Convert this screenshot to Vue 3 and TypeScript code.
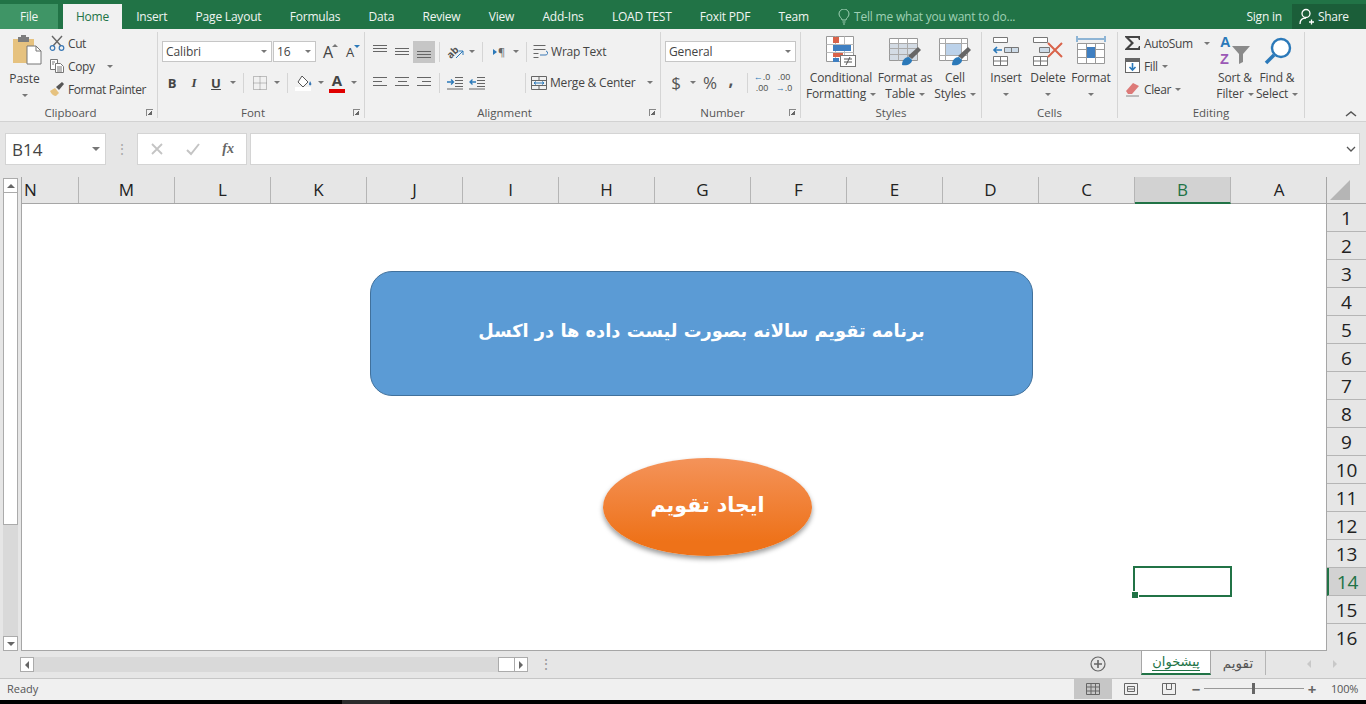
<template>
	<div class="app">
		<!-- title tabs -->
		<div class="tabs">
			<div class="tab file">File</div>
			<div class="tab active">Home</div>
			<div v-for="t in tabs" :key="t" class="tab">{{ t }}</div>
			<div class="tell">
				<svg width="12" height="16" viewBox="0 0 12 16" fill="none" stroke="#9fd0b4">
					<path d="M4 11c0-2-3-3-3-6a5 5 0 0 1 10 0c0 3-3 4-3 6zM4.500 13h3M5 15h2" />
				</svg>
				<span>Tell me what you want to do...</span>
			</div>
			<div class="signin">Sign in</div>
			<div class="share">
				<svg width="16" height="17" viewBox="0 0 16 17" fill="none" stroke="#fff" stroke-width="1.300">
					<circle cx="7" cy="5.500" r="4" />
					<path d="M1 16c0-4 2-6 6-6M10 14h5M12.500 11.500v5" />
				</svg>
				<span>Share</span>
			</div>
		</div>

		<!-- ribbon -->
		<div class="ribbon">
			<div class="group clipboard">
				<div class="body row-flex">
					<div class="paste">
						<svg width="30" height="32" viewBox="0 0 30 32">
							<rect x="1" y="4" width="21" height="24" fill="#e6c27f" />
							<rect x="6" y="2" width="11" height="5" fill="#7d7d7d" />
							<rect x="9" y="0" width="5" height="3" fill="#7d7d7d" />
							<path d="M15 11h9l5 5v13H15z" fill="#fff" stroke="#777" />
							<path d="M24 11v5h5" fill="none" stroke="#777" />
						</svg>
						<span>Paste</span>
						<i class="caret"></i>
					</div>
					<div class="small-col">
						<div class="small">
							<svg width="16" height="16" viewBox="0 0 16 16" fill="none">
								<path d="M3 1l9 10M13 1L4 11" stroke="#666" stroke-width="1.400" />
								<circle cx="3.500" cy="13" r="2.300" stroke="#3a78b5" stroke-width="1.200" />
								<circle cx="12.500" cy="13" r="2.300" stroke="#3a78b5" stroke-width="1.200" />
							</svg>
							<span>Cut</span>
						</div>
						<div class="small">
							<svg width="16" height="16" viewBox="0 0 16 16" fill="#fff" stroke="#777">
								<path d="M1.500 1.500h7v10h-7z" />
								<path d="M6.500 5.500h5l3 3v6h-8z" />
								<path d="M8 9h5M8 11h5M8 13h5M3 4h3M3 6h2" fill="none" />
							</svg>
							<span>Copy</span>
							<i class="caret copy-caret"></i>
						</div>
						<div class="small">
							<svg width="16" height="16" viewBox="0 0 16 16">
								<path d="M1 10l5-3 4 5-3 3c-2 0-5-2-6-5z" fill="#e6c27f" />
								<path d="M7 6l6-5 2 2-5 6z" fill="#555" />
							</svg>
							<span>Format Painter</span>
						</div>
					</div>
				</div>
				<div class="label launch">Clipboard<i class="launcher"></i></div>
			</div>

			<div class="group font">
				<div class="body pad-rows">
					<div class="rib-row">
						<div class="select font-name"><span>Calibri</span><i class="caret"></i></div>
						<div class="select font-size"><span>16</span><i class="caret"></i></div>
						<div class="cell grow-a">A<small class="up"></small></div>
						<div class="cell shrink-a">A<small class="down"></small></div>
					</div>
					<div class="rib-row font-tools">
						<div class="cell bold">B</div>
						<div class="cell italic">I</div>
						<div class="cell underline">U</div>
						<div class="mini"><i class="caret"></i></div>
						<i class="sep"></i>
						<div class="cell">
							<svg width="16" height="16" viewBox="0 0 16 16" fill="none" stroke="#888" stroke-dasharray="1 1">
								<path d="M1.500 1.500h13v13h-13zM1.500 8h13M8 1.500v13" />
							</svg>
						</div>
						<div class="mini"><i class="caret"></i></div>
						<i class="sep"></i>
						<div class="cell">
							<svg width="18" height="16" viewBox="0 0 18 16" fill="none">
								<rect x="0" y="12" width="16" height="4" fill="#fff" />
								<path d="M7 1l6 6-5 5-5-5z" stroke="#555" fill="#fff" />
								<path d="M15 6c1 2 2 3 1 4s-2 0-2-1 1-2 1-3z" fill="#3a78b5" />
							</svg>
						</div>
						<div class="mini"><i class="caret"></i></div>
						<div class="cell color-a">A</div>
						<div class="mini"><i class="caret"></i></div>
					</div>
				</div>
				<div class="label launch">Font<i class="launcher"></i></div>
			</div>

			<div class="group alignment">
				<div class="body pad-rows">
					<div class="rib-row">
						<div class="cell"><i class="lines top"></i></div>
						<div class="cell"><i class="lines mid"></i></div>
						<div class="cell on"><i class="lines low"></i></div>
						<i class="sep tight"></i>
						<div class="cell orient">
							<span class="ab">ab</span>
							<svg width="8" height="8" viewBox="0 0 8 8" fill="none" stroke="#2b79b9">
								<path d="M0 8l7-7M3 1h4v4" />
							</svg>
						</div>
						<div class="mini"><i class="caret"></i></div>
						<i class="sep"></i>
						<div class="cell pilcrow"><span class="tri"></span>¶</div>
						<div class="mini"><i class="caret"></i></div>
						<i class="sep"></i>
						<div class="wide">
							<svg width="16" height="16" viewBox="0 0 16 16" fill="none" stroke="#666">
								<path d="M1.500 1.500h12M1.500 5.500h12M1.500 9.500h5M1.500 13.500h5" />
								<path d="M8 11h5a2 2 0 0 0 1-4" stroke="#3a78b5" />
							</svg>
							<span>Wrap Text</span>
						</div>
					</div>
					<div class="rib-row">
						<div class="cell"><i class="lines al"></i></div>
						<div class="cell"><i class="lines ac"></i></div>
						<div class="cell"><i class="lines ar"></i></div>
						<i class="sep tight"></i>
						<div class="cell">
							<svg width="16" height="14" viewBox="0 0 16 14" fill="none" stroke="#666">
								<path d="M8 1.500h8M8 4.500h8M8 7.500h8M8 10.500h8M0 13h16" />
								<path d="M0 6h6M4 3.500L6.500 6 4 8.500" stroke="#2b79b9" stroke-width="1.300" />
							</svg>
						</div>
						<div class="cell">
							<svg width="16" height="14" viewBox="0 0 16 14" fill="none" stroke="#666">
								<path d="M8 1.500h8M8 4.500h8M8 7.500h8M8 10.500h8M0 13h16" />
								<path d="M1 6h6M3.500 3.500L1 6l2.500 2.500" stroke="#2b79b9" stroke-width="1.300" />
							</svg>
						</div>
						<i class="sep far"></i>
						<div class="wide">
							<svg width="16" height="16" viewBox="0 0 16 16" fill="none" stroke="#666">
								<path d="M.500 1.500h15v13H.500zM.500 5.500h15M.500 10.500h15M8 1.500v4M8 10.500v4" />
								<path d="M3 8h10M5 6.500L3 8l2 1.500M11 6.500L13 8l-2 1.500" stroke="#2b79b9" />
							</svg>
							<span>Merge &amp; Center</span>
							<i class="caret merge-caret"></i>
						</div>
					</div>
				</div>
				<div class="label launch">Alignment<i class="launcher"></i></div>
			</div>

			<div class="group number">
				<div class="body pad-rows">
					<div class="rib-row">
						<div class="select general"><span>General</span><i class="caret"></i></div>
					</div>
					<div class="rib-row num-tools">
						<div class="cell sym">$</div>
						<div class="mini"><i class="caret"></i></div>
						<div class="cell sym percent">%</div>
						<div class="cell sym comma">,</div>
						<i class="sep num-sep"></i>
						<div class="cell dec">
							<span><b>←</b>.0</span><span>.00</span>
						</div>
						<div class="cell dec">
							<span>.00</span><span><b>→</b>.0</span>
						</div>
					</div>
				</div>
				<div class="label launch">Number<i class="launcher"></i></div>
			</div>

			<div class="group styles">
				<div class="body row-flex">
					<div class="big cond">
						<svg width="32" height="32" viewBox="0 0 32 32">
							<path d="M1.500 1.500h27v25h-27z" fill="#fff" stroke="#999" />
							<path d="M1.500 9.500h27M1.500 17.500h27M10.500 1.500v25M19.500 1.500v25" stroke="#bbb" fill="none" />
							<rect x="8" y="2" width="6" height="6" fill="#d9634a" />
							<rect x="8" y="10" width="18" height="6" fill="#3f7fc1" />
							<rect x="8" y="18" width="10" height="4" fill="#d9634a" />
							<rect x="8" y="23" width="6" height="4" fill="#3f7fc1" />
							<rect x="15.500" y="20.500" width="15" height="11" fill="#fff" stroke="#777" />
							<path d="M19 24h8M19 27h8M25 22l-4 8" stroke="#555" fill="none" />
						</svg>
						<span>Conditional</span>
						<span>Formatting<i class="caret inline"></i></span>
					</div>
					<div class="big fmt-table">
						<svg width="34" height="32" viewBox="0 0 34 32">
							<path d="M1.500 3.500h28v22h-28z" fill="#fff" stroke="#999" />
							<rect x="2" y="8" width="27" height="17" fill="#d3dbe4" />
							<path d="M1.500 8.500h28M1.500 13.500h28M1.500 19.500h28M10.500 3.500v22M19.500 3.500v22" stroke="#aaa" fill="none" />
							<path d="M20 21l10-9 3 3-9 9z" fill="#666" />
							<path d="M14 30c0-5 3-8 7-8l3 3c0 4-5 6-10 5z" fill="#2b79b9" />
						</svg>
						<span>Format as</span>
						<span>Table<i class="caret inline"></i></span>
					</div>
					<div class="big cell-styles">
						<svg width="34" height="32" viewBox="0 0 34 32">
							<path d="M1.500 3.500h28v22h-28z" fill="#fff" stroke="#999" />
							<rect x="7" y="8" width="17" height="13" fill="#bcd2ea" />
							<path d="M7.500 3.500v22M23.500 3.500v22M1.500 8.500h28M1.500 20.500h28" stroke="#aaa" fill="none" />
							<path d="M20 21l10-9 3 3-9 9z" fill="#666" />
							<path d="M14 30c0-5 3-8 7-8l3 3c0 4-5 6-10 5z" fill="#2b79b9" />
						</svg>
						<span>Cell</span>
						<span>Styles<i class="caret inline"></i></span>
					</div>
				</div>
				<div class="label">Styles</div>
			</div>

			<div class="group cells">
				<div class="body row-flex">
					<div class="big cell-btn">
						<svg width="28" height="32" viewBox="0 0 28 32" fill="#fff" stroke="#777">
							<path d="M1.500 2.500h14v5h-14zM1.500 21.500h14v9h-14zM1.500 26h14M8.500 21.500v9" />
							<path d="M12.500 12.500h14v5h-14zM19.500 12.500v5" fill="#cddbe8" />
							<path d="M2 15h8M5 12l-3 3 3 3" stroke="#2b79b9" stroke-width="1.600" fill="none" />
						</svg>
						<span>Insert</span>
						<i class="caret below"></i>
					</div>
					<div class="big cell-btn">
						<svg width="32" height="32" viewBox="0 0 32 32" fill="#fff" stroke="#777">
							<path d="M1.500 2.500h14v5h-14zM1.500 21.500h14v9h-14zM1.500 26h14M8.500 21.500v9" />
							<path d="M7.500 12.500h10v5h-10z" fill="#cddbe8" />
							<path d="M16 8l14 14M30 8L16 22" stroke="#d9634a" stroke-width="2" fill="none" />
						</svg>
						<span>Delete</span>
						<i class="caret below"></i>
					</div>
					<div class="big cell-btn format">
						<svg width="30" height="32" viewBox="0 0 30 32" fill="none" stroke="#999">
							<path d="M1 1v6M29 1v6M2 4h26" stroke="#2b79b9" />
							<path d="M1.500 8.500h27v20h-27z" fill="#fff" />
							<path d="M1.500 14.500h27M1.500 22.500h27M10.500 8.500v20M19.500 8.500v20" />
							<rect x="11" y="12" width="8" height="11" fill="#3f7fc1" stroke="none" />
						</svg>
						<span>Format</span>
						<i class="caret below"></i>
					</div>
				</div>
				<div class="label">Cells</div>
			</div>

			<div class="group editing">
				<div class="body row-flex">
					<div class="small-col edit-col">
						<div class="small">
							<svg width="16" height="16" viewBox="0 0 16 16" fill="#444">
								<path d="M0 1h15v4h-1l-1-2H4l5 5-5 5h9l1-2h1v4H0v-1l6-6-6-6z" />
							</svg>
							<span>AutoSum</span>
							<i class="caret auto-caret"></i>
						</div>
						<div class="small">
							<svg width="16" height="16" viewBox="0 0 16 16" fill="none">
								<rect x=".500" y=".500" width="14" height="14" fill="#fff" stroke="#666" />
								<rect x="1" y="1" width="13" height="3" fill="#666" />
								<path d="M7.500 5v7M4.500 9l3 3 3-3" stroke="#2b79b9" stroke-width="1.600" />
							</svg>
							<span>Fill</span>
							<i class="caret inline"></i>
						</div>
						<div class="small">
							<svg width="16" height="16" viewBox="0 0 16 16">
								<path d="M1 10l7-8 6 3-7 8H3z" fill="#dd7a78" />
								<path d="M1 15h13" stroke="#888" fill="none" />
							</svg>
							<span>Clear</span>
							<i class="caret inline"></i>
						</div>
					</div>
					<div class="big sort">
						<svg width="32" height="32" viewBox="0 0 32 32">
							<path d="M13 11h18l-7 8v8l-4 2V19z" fill="#8a8a8a" />
						</svg>
						<span class="az"><b class="a-letter">A</b><b class="z-letter">Z</b></span>
						<span>Sort &amp;</span>
						<span>Filter<i class="caret inline"></i></span>
					</div>
					<div class="big sort">
						<svg width="32" height="32" viewBox="0 0 32 32" fill="none">
							<circle cx="20" cy="13" r="9" stroke="#2b79b9" stroke-width="2.400" fill="#fff" />
							<path d="M13 20L5 28" stroke="#2b79b9" stroke-width="3.600" />
						</svg>
						<span>Find &amp;</span>
						<span>Select<i class="caret inline"></i></span>
					</div>
				</div>
				<div class="label">Editing</div>
			</div>

			<div class="ribbon-toggle">
				<svg width="12" height="7" viewBox="0 0 12 7" fill="none" stroke="#555" stroke-width="1.500">
					<path d="M1 6l5-4 5 4" />
				</svg>
			</div>
		</div>

		<!-- formula bar -->
		<div class="formula">
			<div class="name-box"><span>B14</span><i class="caret dark"></i></div>
			<div class="fdots">⋮</div>
			<div class="fx-box">
				<svg width="14" height="14" viewBox="0 0 14 14" stroke="#c4c4c4" stroke-width="1.800" fill="none">
					<path d="M2 2l10 10M12 2L2 12" />
				</svg>
				<svg width="16" height="14" viewBox="0 0 16 14" stroke="#c4c4c4" stroke-width="2" fill="none">
					<path d="M2 8l4 4 8-10" />
				</svg>
				<span class="fx">fx</span>
			</div>
			<div class="input">
				<svg width="10" height="6" viewBox="0 0 10 6" stroke="#555" stroke-width="1.300" fill="none">
					<path d="M1 1l4 4 4-4" />
				</svg>
			</div>
		</div>

		<!-- sheet -->
		<div class="sheet">
			<div class="vscroll">
				<div class="vbtn"><i class="arrow-up"></i></div>
				<div class="vthumb"></div>
				<div class="vtrack"></div>
				<div class="vbtn"><i class="arrow-down"></i></div>
			</div>
			<div class="main">
				<div class="col-heads">
					<div v-for="c in columns" :key="c" class="col-head" :class="{ sel: c === 'B' }">{{ c }}</div>
				</div>
				<div class="cells-area">
					<div class="banner">برنامه تقویم سالانه بصورت لیست داده ها در اکسل</div>
					<div class="oval">ایجاد تقویم</div>
					<div class="selection"><i class="handle"></i></div>
				</div>
			</div>
			<div class="row-heads">
				<div class="corner"><i class="corner-tri"></i></div>
				<div v-for="r in rows" :key="r" class="row-head" :class="{ sel: r === 14 }">{{ r }}</div>
			</div>
		</div>

		<!-- sheet tabs and horizontal scroll -->
		<div class="sheet-bottom">
			<div class="hscroll">
				<div class="hbtn"><i class="arrow-left"></i></div>
				<div class="htrack"></div>
				<div class="hthumb"></div>
				<div class="hbtn"><i class="arrow-right"></i></div>
			</div>
			<div class="hdots">⋮</div>
			<div class="add-sheet">
				<svg width="16" height="16" viewBox="0 0 16 16" fill="none" stroke="#666" stroke-width="1.200">
					<circle cx="8" cy="8" r="7" />
					<path d="M8 4v8M4 8h8" stroke-width="1.600" />
				</svg>
			</div>
			<div class="sheet-tab current"><span>پیشخوان</span></div>
			<div class="sheet-tab other">تقویم</div>
			<div class="sheet-nav">
				<i class="nav-left"></i>
				<i class="nav-right"></i>
			</div>
		</div>

		<!-- status bar -->
		<div class="status">
			<span class="ready">Ready</span>
			<div class="view on">
				<svg width="14" height="12" viewBox="0 0 14 12" fill="none" stroke="#666">
					<path d="M.500.500h13v11H.500zM.500 4h13M.500 8h13M5 .500v11M9.500 .500v11" />
				</svg>
			</div>
			<div class="view">
				<svg width="14" height="12" viewBox="0 0 14 12" fill="none" stroke="#666">
					<path d="M.500.500h13v11H.500zM3.500 3.500h7v5h-7zM3.500 6h7" />
				</svg>
			</div>
			<div class="view">
				<svg width="14" height="12" viewBox="0 0 14 12" fill="none" stroke="#666">
					<path d="M.500.500h13v11H.500zM4.500 .500v6h5v-6" />
				</svg>
			</div>
			<div class="zoom-minus">−</div>
			<div class="slider"><i class="knob"></i></div>
			<div class="zoom-plus">+</div>
			<span class="percent-label">100%</span>
		</div>
		<div class="taskbar"><i class="task-item"></i></div>
	</div>
</template>

<script setup lang="ts">
const tabs: string[] = [
	'Insert',
	'Page Layout',
	'Formulas',
	'Data',
	'Review',
	'View',
	'Add-Ins',
	'LOAD TEST',
	'Foxit PDF',
	'Team',
]

// the sheet is right-to-left, so column A sits next to the row headers
const columns: string[] = ['N', 'M', 'L', 'K', 'J', 'I', 'H', 'G', 'F', 'E', 'D', 'C', 'B', 'A']

const rows: number[] = Array.from({ length: 16 }, (_, i) => i + 1)
</script>

<style>
html,
body {
	margin: 0;
	background: #e6e6e6;
	overflow: hidden;
}
</style>

<style scoped>
.app {
	width: 1366px;
	height: 704px;
	overflow: hidden;
	display: flex;
	flex-direction: column;
	font-family: 'Open Sans', 'Noto Sans', sans-serif;
	font-size: 12px;
	color: #444;
	background: #e6e6e6;
}

i {
	display: block;
	font-style: normal;
}

.tabs {
	height: 29px;
	flex: none;
	background: #217346;
	display: flex;
	color: #f0f5f2;
	padding-top: 4px;
	box-sizing: border-box;
}

.tab {
	padding: 0 14.150px;
	line-height: 25px;
	letter-spacing: -0.2px;
}

.tab.file {
	width: 58px;
	margin-right: 5px;
	padding: 0;
	box-sizing: border-box;
	text-align: center;
	background: #3f9566;
}

.tab.active {
	width: 59px;
	padding: 0;
	text-align: center;
	background: #f1f1f1;
	color: #217346;
}

.tell {
	margin-left: 15px;
	display: flex;
	align-items: center;
	gap: 4px;
	color: #9fd0b4;
	width: 400px;
	letter-spacing: -0.2px;
	height: 25px;
}

.signin {
	line-height: 25px;
	margin-left: auto;
	margin-right: 10px;
	letter-spacing: -0.2px;
}

.share {
	width: 74px;
	height: 25px;
	flex: none;
	background: #1b5e39;
	display: flex;
	align-items: center;
	gap: 3px;
	padding-left: 7px;
	box-sizing: border-box;
	letter-spacing: -0.3px;
}

.ribbon {
	height: 93px;
	flex: none;
	box-sizing: border-box;
	background: #f1f1f1;
	border-bottom: 1px solid #d2d2d2;
	padding-top: 3px;
	display: flex;
}

.group {
	height: 86px;
	box-sizing: border-box;
	border-right: 1px solid #d5d5d5;
	display: flex;
	flex-direction: column;
	flex: none;
}

.clipboard { width: 158px; }
.font { width: 207px; }
.alignment { width: 296px; }
.number { width: 140px; }
.styles { width: 181px; }
.cells { width: 136px; }
.editing { width: 187px; }

.body {
	height: 72px;
	flex: none;
}

.row-flex {
	display: flex;
}

.label {
	position: relative;
	height: 17px;
	flex: none;
	line-height: 17px;
	text-align: center;
	font-size: 11.500px;
	color: #555;
}

.label.launch {
	padding-right: 16px;
}

/* little corner arrow at the end of a group label */
.launcher {
	position: absolute;
	right: 4px;
	top: 5px;
	width: 7px;
	height: 7px;
	border-left: 1px solid #888;
	border-top: 1px solid #888;
	box-sizing: border-box;
}

.launcher::after {
	content: '';
	display: block;
	width: 4px;
	height: 4px;
	margin: 1px;
	background: linear-gradient(135deg, transparent 50%, #666 50%);
}

.caret {
	width: 0;
	height: 0;
	border-left: 3px solid transparent;
	border-right: 3px solid transparent;
	border-top: 3px solid #777;
}

.caret.inline {
	display: inline-block;
	vertical-align: middle;
	margin-left: 4px;
}

.small .caret.inline {
	margin-left: 1px;
}

.paste {
	width: 49px;
	flex: none;
	display: flex;
	flex-direction: column;
	align-items: center;
	padding-top: 3px;
	box-sizing: border-box;
	line-height: 16px;
}

.paste svg {
	margin-left: 4px;
	margin-bottom: 4px;
}

.paste .caret {
	margin-top: 7px;
}

.small-col {
	display: flex;
	flex-direction: column;
	gap: 1px;
}

.small {
	height: 22px;
	display: flex;
	align-items: center;
	gap: 3px;
	letter-spacing: -0.4px;
}

.copy-caret {
	margin-left: 9px;
}

.pad-rows {
	padding-top: 9px;
	box-sizing: border-box;
	display: flex;
	flex-direction: column;
	gap: 10px;
}

.rib-row {
	height: 21px;
	display: flex;
	align-items: center;
}

.font .rib-row:first-child {
	padding-left: 4px;
}

.select {
	height: 21px;
	box-sizing: border-box;
	background: #fff;
	border: 1px solid #c6c6c6;
	display: flex;
	align-items: center;
	justify-content: space-between;
	padding: 0 4px 0 3px;
	letter-spacing: -0.1px;
}

.font-name {
	width: 110px;
}

.font-size {
	width: 43px;
	margin-left: 1px;
}

.general {
	width: 131px;
	margin-left: 4px;
}

.cell {
	width: 22px;
	height: 22px;
	flex: none;
	display: flex;
	align-items: center;
	justify-content: center;
	position: relative;
}

.cell.on {
	background: #c6c6c6;
}

.grow-a {
	font-size: 16px;
	margin-left: 1px;
}

.shrink-a {
	font-size: 13px;
}

.up,
.down {
	position: absolute;
	right: 1px;
	width: 0;
	height: 0;
	border-left: 3px solid transparent;
	border-right: 3px solid transparent;
}

.up {
	top: 3px;
	border-bottom: 3px solid #777;
}

.down {
	top: 4px;
	border-top: 3px solid #2b79b9;
}

.font-tools {
	margin-left: 3px;
}

.bold {
	font-weight: 700;
	font-size: 13px;
}

.italic {
	font-style: italic;
	font-family: 'Liberation Serif', serif;
	font-weight: 700;
	font-size: 13px;
}

.underline {
	font-weight: 700;
	text-decoration: underline;
	font-size: 13px;
}

.color-a {
	font-weight: 700;
	font-size: 15px;
	line-height: 14px;
	padding-bottom: 5px;
	box-sizing: border-box;
}

.color-a::after {
	content: '';
	position: absolute;
	left: 3px;
	right: 3px;
	bottom: 1px;
	height: 4px;
	background: #e00000;
}

.mini {
	width: 11px;
	height: 21px;
	flex: none;
	display: flex;
	align-items: center;
	justify-content: center;
}

.sep {
	width: 1px;
	height: 20px;
	flex: none;
	background: #d5d5d5;
	margin: 0 5px;
}

.sep.tight {
	margin: 0 4px 0 4px;
}

.sep.far {
	margin: 0 5px 0 37px;
}

.alignment .rib-row {
	padding-left: 4px;
}

/* three stacked strokes for the alignment buttons */
.lines {
	width: 14px;
	height: 14px;
	background-repeat: no-repeat;
	background-image: linear-gradient(#666, #666), linear-gradient(#666, #666), linear-gradient(#666, #666);
	background-size: 14px 1px, 14px 1px, 14px 1px;
}

.lines.top {
	background-position: 0 0, 0 3px, 0 6px;
}

.lines.mid {
	background-position: 0 3px, 0 6px, 0 9px;
}

.lines.low {
	background-position: 0 6px, 0 9px, 0 12px;
}

.lines.al {
	background-size: 14px 1px, 9px 1px, 14px 1px;
	background-position: 0 1px, 0 5px, 0 9px;
}

.lines.ac {
	background-size: 14px 1px, 9px 1px, 14px 1px;
	background-position: 0 1px, center 5px, 0 9px;
}

.lines.ar {
	background-size: 14px 1px, 9px 1px, 14px 1px;
	background-position: 0 1px, right 5px, 0 9px;
}

.orient .ab {
	font-size: 10px;
	font-weight: 700;
	line-height: 10px;
	color: #555;
	transform: rotate(-45deg);
	margin-right: -3px;
}

.orient svg {
	margin-top: 4px;
}

.pilcrow {
	color: #666;
	font-size: 11px;
}

.tri {
	width: 0;
	height: 0;
	border-top: 3px solid transparent;
	border-bottom: 3px solid transparent;
	border-left: 4px solid #2b79b9;
	margin-right: 1px;
}

.wide {
	display: flex;
	align-items: center;
	gap: 3px;
	letter-spacing: -0.2px;
}

.merge-caret {
	margin-left: 9px;
}

.num-tools {
	padding-left: 4px;
}

.sym {
	font-size: 17px;
	color: #555;
}

.percent {
	margin-left: 1px;
}

.comma {
	margin-left: -1px;
	font-weight: 700;
	padding-bottom: 6px;
	box-sizing: border-box;
}

.num-sep {
	margin: 0 3px 0 5px;
}

.dec {
	flex-direction: column;
	font-family: 'Liberation Sans', sans-serif;
	font-size: 9px;
	line-height: 11px;
	color: #555;
}

.dec b {
	color: #2b79b9;
	font-weight: 400;
}

.big {
	flex: none;
	display: flex;
	flex-direction: column;
	align-items: center;
	padding-top: 3px;
	box-sizing: border-box;
	line-height: 16px;
	position: relative;
	letter-spacing: -0.15px;
	white-space: nowrap;
}

.big svg {
	margin-bottom: 3px;
	flex: none;
}

.cond { width: 80px; }
.fmt-table { width: 48px; }
.cell-styles { width: 52px; }

.cell-btn {
	width: 42px;
}

.cell-btn:first-child {
	margin-left: 3px;
}

.cell-btn.format {
	width: 44px;
}

.caret.below {
	margin-top: 7px;
}

.edit-col {
	width: 89px;
	margin-left: 7px;
	flex: none;
}

.auto-caret {
	margin-left: 8px;
}

.sort {
	width: 42px;
}

.az {
	position: absolute;
	left: 6px;
	top: 2px;
	display: flex;
	flex-direction: column;
	font-family: 'Liberation Sans', sans-serif;
	font-size: 14.500px;
	line-height: 17px;
}

.a-letter {
	color: #2b79b9;
}

.z-letter {
	color: #9b59b6;
}

.ribbon-toggle {
	margin-left: auto;
	margin-right: 9px;
	margin-bottom: 4px;
	align-self: flex-end;
	line-height: 0;
}

.formula {
	height: 55px;
	flex: none;
	box-sizing: border-box;
	display: flex;
	padding: 11px 6px 12px 5px;
	background: #e6e6e6;
}

.name-box,
.fx-box,
.input {
	height: 32px;
	box-sizing: border-box;
	background: #fff;
	border: 1px solid #d4d4d4;
	display: flex;
	align-items: center;
}

.name-box {
	width: 101px;
	padding: 0 5px 0 6px;
	justify-content: space-between;
	font-size: 17px;
	color: #444;
}

.caret.dark {
	border-left-width: 4px;
	border-right-width: 4px;
	border-top-width: 4px;
}

.fdots {
	width: 31px;
	text-align: center;
	line-height: 32px;
	color: #aaa;
	font-size: 14px;
}

.fx-box {
	width: 110px;
	padding: 0 12px;
	justify-content: space-between;
}

.fx {
	font-family: 'Liberation Serif', serif;
	font-style: italic;
	font-weight: 700;
	font-size: 14px;
	color: #666;
}

.input {
	flex: 1;
	margin-left: 3px;
	justify-content: flex-end;
	padding-right: 3px;
}

.sheet {
	height: 474px;
	flex: none;
	display: flex;
}

.vscroll {
	width: 21px;
	flex: none;
	box-sizing: border-box;
	padding: 1px 3px 0;
	display: flex;
	flex-direction: column;
}

.vbtn {
	height: 15px;
	flex: none;
	box-sizing: border-box;
	background: #fff;
	border: 1px solid #ababab;
	display: flex;
	align-items: center;
	justify-content: center;
}

.vthumb {
	height: 332px;
	flex: none;
	background: #fff;
	box-sizing: border-box;
	border: 1px solid #ababab;
	border-top: none;
}

.vtrack {
	flex: 1;
	background: #d9d9d9;
}

.arrow-up,
.arrow-down {
	width: 0;
	height: 0;
	border-left: 4px solid transparent;
	border-right: 4px solid transparent;
}

.arrow-up {
	border-bottom: 4px solid #666;
}

.arrow-down {
	border-top: 4px solid #666;
}

.main {
	flex: 1;
	min-width: 0;
	display: flex;
	flex-direction: column;
	border-left: 1px solid #a6a6a6;
	border-bottom: 1px solid #a6a6a6;
	box-sizing: border-box;
	overflow: hidden;
}

.col-heads {
	height: 27px;
	flex: none;
	display: flex;
	box-sizing: border-box;
	border-bottom: 1px solid #a6a6a6;
	margin-left: -39px;
}

.col-head {
	width: 96px;
	flex: none;
	box-sizing: border-box;
	border-right: 1px solid #b5b5b5;
	text-align: center;
	line-height: 26px;
	font-size: 17px;
	color: #222;
}

.col-head:last-child {
	border-right: none;
}

.col-head.sel {
	background: #d2d2d2;
	color: #217346;
	border-bottom: 2px solid #217346;
	height: 27px;
}

.cells-area {
	position: relative;
	flex: 1;
	background: #fff;
}

/* shapes float over the cells */
.banner {
	position: absolute;
	left: 348px;
	top: 67px;
	width: 663px;
	height: 125px;
	box-sizing: border-box;
	padding-bottom: 6px;
	background: #5b9bd5;
	border: 1px solid #41719c;
	border-radius: 22px;
	display: flex;
	align-items: center;
	justify-content: center;
	direction: rtl;
	color: #fff;
	font-family: 'DejaVu Sans', sans-serif;
	font-weight: 700;
	font-size: 17.800px;
}

.oval {
	position: absolute;
	left: 581px;
	top: 254px;
	width: 209px;
	height: 98px;
	box-sizing: border-box;
	padding-bottom: 4px;
	border-radius: 50%;
	background: linear-gradient(#f4935a, #ee7219 85%);
	box-shadow: 0 3px 5px rgba(0, 0, 0, 0.4);
	display: flex;
	align-items: center;
	justify-content: center;
	direction: rtl;
	color: #fff;
	font-family: 'DejaVu Sans', sans-serif;
	font-weight: 700;
	font-size: 20.500px;
}

.selection {
	position: absolute;
	left: 1111px;
	top: 362px;
	width: 99px;
	height: 31px;
	box-sizing: border-box;
	border: 2px solid #217346;
}

.handle {
	position: absolute;
	left: -3px;
	bottom: -3px;
	width: 7px;
	height: 7px;
	background: #217346;
	border-right: 1px solid #fff;
	border-top: 1px solid #fff;
	box-sizing: border-box;
}

.row-heads {
	width: 40px;
	flex: none;
	overflow: hidden;
	border-left: 1px solid #a6a6a6;
	box-sizing: border-box;
}

.corner {
	height: 27px;
	box-sizing: border-box;
	border-bottom: 1px solid #a6a6a6;
	padding: 3px 0 0 3px;
}

.corner-tri {
	width: 0;
	height: 0;
	border-left: 20px solid transparent;
	border-bottom: 20px solid #b5b5b5;
}

.row-head {
	height: 28px;
	box-sizing: border-box;
	border-bottom: 1px solid #b5b5b5;
	text-align: center;
	line-height: 29px;
	font-size: 19px;
	color: #222;
}

.row-head.sel {
	background: #d2d2d2;
	color: #217346;
	border-left: 2px solid #217346;
}

.sheet-bottom {
	height: 27px;
	flex: none;
	display: flex;
	align-items: flex-start;
	background: #e6e6e6;
}

.hscroll {
	width: 508px;
	height: 15px;
	margin: 6px 0 0 20px;
	flex: none;
	display: flex;
}

.hbtn {
	width: 14px;
	height: 15px;
	flex: none;
	background: #fff;
	box-sizing: border-box;
	border: 1px solid #ababab;
	display: flex;
	align-items: center;
	justify-content: center;
}

.htrack {
	flex: 1;
	background: #d9d9d9;
}

.hthumb {
	width: 16px;
	flex: none;
	background: #fff;
	box-sizing: border-box;
	border: 1px solid #ababab;
	border-right: none;
}

.arrow-left,
.arrow-right,
.nav-left,
.nav-right {
	width: 0;
	height: 0;
	border-top: 4px solid transparent;
	border-bottom: 4px solid transparent;
}

.arrow-left {
	border-right: 4px solid #666;
}

.arrow-right {
	border-left: 4px solid #666;
}

.hdots {
	width: 36px;
	text-align: center;
	color: #999;
	line-height: 26px;
	font-size: 14px;
}

.add-sheet {
	margin-left: 526px;
	padding-top: 5px;
	width: 16px;
	flex: none;
}

.sheet-tab {
	font-family: 'DejaVu Sans', sans-serif;
	direction: rtl;
	font-size: 13.500px;
	height: 24px;
	line-height: 25px;
	text-align: center;
	box-sizing: border-box;
	flex: none;
}

.sheet-tab.current {
	margin-left: 35px;
	width: 70px;
	font-size: 13px;
	line-height: 22px;
	background: #fff;
	color: #217346;
	border-left: 1px solid #a6a6a6;
	border-right: 1px solid #a6a6a6;
	border-bottom: 2px solid #217346;
}

.sheet-tab.current span {
	display: inline-block;
	line-height: 17px;
	border-bottom: 1px solid #217346;
}

.sheet-tab.other {
	width: 55px;
	color: #555;
	border-right: 1px solid #b5b5b5;
}

.sheet-nav {
	margin-left: 41px;
	width: 30px;
	padding-top: 9px;
	display: flex;
	justify-content: space-between;
}

.nav-left {
	border-right: 4px solid #c8c8c8;
}

.nav-right {
	border-left: 4px solid #c8c8c8;
}

.status {
	height: 22px;
	flex: none;
	box-sizing: border-box;
	padding-bottom: 2px;
	background: #f0f0f0;
	border-top: 1px solid #c6c6c6;
	display: flex;
	align-items: center;
	font-size: 11px;
	color: #555;
}

.ready {
	margin-left: 7px;
	margin-right: 1029px;
	width: 38px;
	flex: none;
}

.view {
	width: 38px;
	height: 21px;
	flex: none;
	display: flex;
	align-items: center;
	justify-content: center;
}

.view.on {
	background: #c6c6c6;
}

.zoom-minus,
.zoom-plus {
	font-size: 15px;
	font-weight: 700;
	width: 10px;
	text-align: center;
	color: #666;
}

.zoom-minus {
	margin-left: 3px;
}

.slider {
	width: 100px;
	height: 1px;
	margin: 0 3px;
	background: #999;
	position: relative;
}

.knob {
	position: absolute;
	left: 48px;
	top: -5px;
	width: 3px;
	height: 11px;
	background: #666;
}

.percent-label {
	margin-left: 14px;
	letter-spacing: -0.2px;
}

.taskbar {
	flex: 1;
	background: #000;
	padding-left: 342px;
}

.task-item {
	width: 48px;
	height: 100%;
	background: #2c2c2c;
}
</style>
